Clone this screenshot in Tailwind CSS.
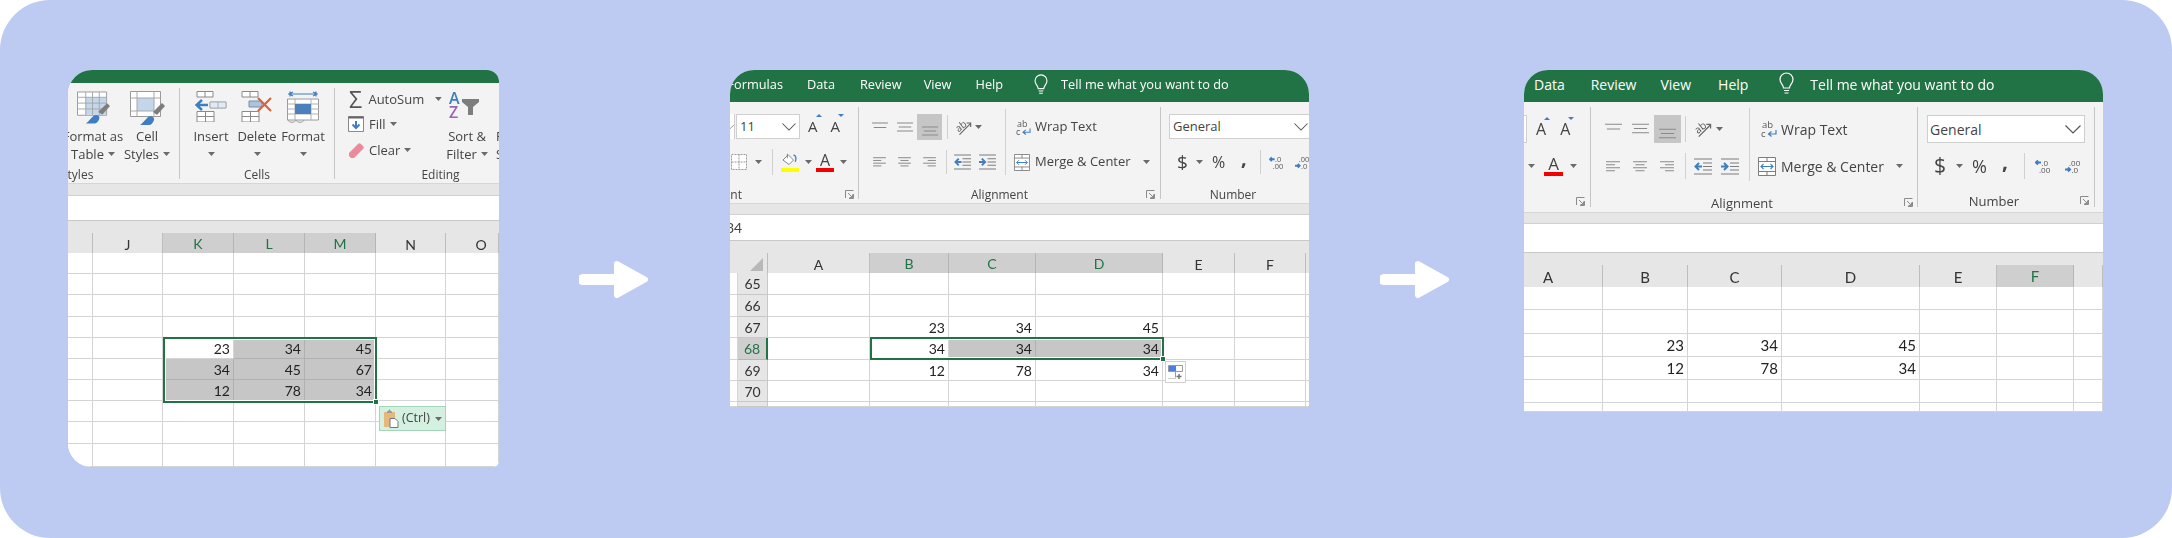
<!DOCTYPE html>
<html lang="en">
<head>
  <meta charset="UTF-8" />
  <title>Excel: delete row and shift up</title>
  <script src="https://cdn.jsdelivr.net/npm/@tailwindcss/browser@4"></script>
</head>
<body class="bg-white">

<!-- icon sheet -->
<svg width="0" height="0" class="absolute">
  <defs>
    <symbol id="caret" viewBox="0 0 7 4"><path d="M0 0h7L3.5 4z" fill="#6a6a6a"/></symbol>
    <symbol id="launcher" viewBox="0 0 9 9"><path d="M.5 8V.5H8.5M4 8.5H8.5V4M3 3l4.5 4.5M7.5 4.5v3h-3" fill="none" stroke="#8a8a8a"/></symbol>
    <symbol id="chevron" viewBox="0 0 16 9"><path d="M.5.5L8 8 15.5.5" fill="none" stroke="#555" stroke-width="1.2"/></symbol>
    <symbol id="al-top" viewBox="0 0 18 12"><path d="M0 1h18M2 6h14" stroke="#8a8a8a" stroke-width="1.2"/></symbol>
    <symbol id="al-mid" viewBox="0 0 18 12"><path d="M0 1h18M2 5.5h14M0 10h18" stroke="#8a8a8a" stroke-width="1.2"/></symbol>
    <symbol id="al-left" viewBox="0 0 14 11"><path d="M0 .8h14M0 3.8h9M0 6.8h14M0 9.8h9" stroke="#8a8a8a" stroke-width="1.1"/></symbol>
    <symbol id="al-center" viewBox="0 0 14 11"><path d="M0 .8h14M2.5 3.8h9M0 6.8h14M2.5 9.8h9" stroke="#8a8a8a" stroke-width="1.1"/></symbol>
    <symbol id="al-right" viewBox="0 0 14 11"><path d="M0 .8h14M5 3.8h9M0 6.8h14M5 9.8h9" stroke="#8a8a8a" stroke-width="1.1"/></symbol>
    <symbol id="ind-less" viewBox="0 0 18 17"><path d="M0 1h18M9 5h9M9 8.5h9M9 12h9M0 16h18" stroke="#7d7d7d" stroke-width="1.1"/><path d="M8 8.5H2M5 5L1.5 8.5 5 12" fill="none" stroke="#3f7fc1" stroke-width="2"/></symbol>
    <symbol id="ind-more" viewBox="0 0 18 17"><path d="M0 1h18M9 5h9M9 8.5h9M9 12h9M0 16h18" stroke="#7d7d7d" stroke-width="1.1"/><path d="M0 8.5h6M3 5l3.5 3.5L3 12" fill="none" stroke="#3f7fc1" stroke-width="2"/></symbol>
    <symbol id="orient" viewBox="0 0 19 18"><text x="1" y="12" transform="rotate(-38 6 9)" font-family="Open Sans" font-size="11" fill="#555">ab</text><path d="M5 17L17 5M13 4h4.500v4.500" fill="none" stroke="#666" stroke-width="1.300"/></symbol>
    <symbol id="wrap" viewBox="0 0 16 18"><text x="1" y="8" font-family="Open Sans" font-size="9.500" fill="#555">ab</text><text x="0" y="17" font-family="Open Sans" font-size="9.500" fill="#555">c</text><path d="M15 10v4H8M10.500 11.500L7.500 14l3 2.500" fill="none" stroke="#3f7fc1" stroke-width="1.200"/></symbol>
    <symbol id="merge" viewBox="0 0 18 19"><path d="M.5.5h17v18H.5zM.5 4.500h17M.5 14.500h17M9 .5v4M9 14.500v4" fill="#fff" stroke="#7d7d7d"/><path d="M3 9.500h12M5.500 7L3 9.500 5.500 12M12.500 7L15 9.500 12.500 12" fill="none" stroke="#3f7fc1" stroke-width="1.100"/></symbol>
    <symbol id="dec-more" viewBox="0 0 15 14"><path d="M6 3.500H1M3 1.500L1 3.500l2 2" fill="none" stroke="#3f7fc1" stroke-width="2"/><text x="6.500" y="6.500" font-family="Open Sans" font-size="8" fill="#555">.0</text><text x="4" y="13.500" font-family="Open Sans" font-size="8" fill="#555">.00</text></symbol>
    <symbol id="dec-less" viewBox="0 0 15 14"><text x="4" y="6.500" font-family="Open Sans" font-size="8" fill="#555">.00</text><path d="M0 10.500h5M3 8.500l2 2-2 2" fill="none" stroke="#3f7fc1" stroke-width="2"/><text x="6.500" y="13.500" font-family="Open Sans" font-size="8" fill="#555">.0</text></symbol>
    <symbol id="borders" viewBox="0 0 16 16"><path d="M.5.5h15v15H.5zM8 .5v15M.5 8h15" fill="#fff" stroke="#999" stroke-dasharray="2 1"/></symbol>
    <symbol id="bucket" viewBox="0 0 18 17"><path d="M1 8l6-6 6 6-5 5z" fill="#fff" stroke="#777"/><path d="M6 1v5" stroke="#777"/><path d="M13 2c3 1 3 5 2 8" fill="none" stroke="#3f7fc1" stroke-width="1.500"/></symbol>
    <symbol id="bulb" viewBox="0 0 15 24"><path d="M4.500 16c0-3-3.500-5-3.500-8.500a6.500 6.500 0 0113 0C14 11 10.500 13 10.500 16zM5 18.500h5M5.500 21h4" fill="none" stroke="#fff" stroke-width="1.200"/></symbol>
    <symbol id="tbl-brush" viewBox="0 0 34 33"><path d="M.5.5h30v24H.5z" fill="#fff" stroke="#9a9a9a"/><path d="M9 6h21v18H9z" fill="#c3d6ea"/><path d="M.5 6h30M.5 12h30M.5 18h30M9 .5v24M16 .5v24M23 .5v24" stroke="#a8a8a8" fill="none"/><path d="M22 21l9-9 3 3-8 9z" fill="#7d7d7d"/><path d="M9 33c2-1 5-5 8-8 3-2 7 0 6 3-1 3-3 5-5 5z" fill="#3f7fc1"/></symbol>
    <symbol id="cell-brush" viewBox="0 0 35 34"><path d="M.5.5h30v25H.5z" fill="#fff" stroke="#9a9a9a"/><path d="M7 7h17v13H7z" fill="#c3d6ea"/><path d="M.5 7h30M.5 20h30M7 .5v25M24 .5v25" stroke="#a8a8a8" fill="none"/><path d="M23 21l9-9 3 3-8 9z" fill="#7d7d7d"/><path d="M10 34c2-1 5-5 8-8 3-2 7 0 6 3-1 3-3 5-5 5z" fill="#3f7fc1"/></symbol>
    <symbol id="ins" viewBox="0 0 32 31"><path d="M2 .5h16v5.500H2zM10 .5v5.500M2 20.500h17V31H2zM10.500 20.500V31M2 25.500h17M15 11h16v6H15zM23 11v6" fill="#fff" stroke="#8a8a8a"/><path d="M15 11h16v6H15z" fill="#c3d6ea" fill-opacity=".5"/><path d="M13 14H2M7 9L1.500 14 7 19" fill="none" stroke="#3f7fc1" stroke-width="2.500"/></symbol>
    <symbol id="del" viewBox="0 0 32 31"><path d="M1 .5h16v5.500H1zM9 .5v5.500M1 20.500h17V31H1zM9.500 20.500V31M1 25.500h17" fill="#fff" stroke="#8a8a8a"/><path d="M8 10h13v6H8z" fill="#a9c4e0" stroke="#7d8fa0"/><path d="M17 7l13 13M30 7L17 20" stroke="#d9623c" stroke-width="2.200"/></symbol>
    <symbol id="fmt" viewBox="0 0 32 32"><path d="M1 3h30M3 .5v5M29 .5v5M6 1L2 3l4 2M26 1l4 2-4 2" fill="none" stroke="#3f7fc1" stroke-width="1.200"/><path d="M.5 8h31v21H.5z" fill="#fff" stroke="#9a9a9a"/><path d="M.5 13h31M.5 18h31M.5 23h31M8 8v21M24 8v21" stroke="#b0b0b0" fill="none"/><path d="M8 13h16v10H8z" fill="#4a80bc"/><path d="M1 29c1 3 7 3 8 0 1 3 7 3 8 0" fill="none" stroke="#999"/></symbol>
    <symbol id="fillbox" viewBox="0 0 16 16"><path d="M.5.5h15v15H.5z" fill="#fff" stroke="#8a8a8a"/><path d="M.5 1.500h15" stroke="#666" stroke-width="2"/><path d="M8 5v7M4.500 8.500L8 12l3.500-3.500" fill="none" stroke="#3f7fc1" stroke-width="2"/></symbol>
    <symbol id="eraser" viewBox="0 0 15 15"><path d="M0 10l9-9c1-1 2-1 3 0l2 2c1 1 1 2 0 3l-9 9c-1 .7-2 .7-3 0l-2-2c-.5-1-.5-2 0-3z" fill="#ea8a9a"/></symbol>
    <symbol id="funnel" viewBox="0 0 17 16"><path d="M0 0h17v3l-6 5v8H6V8L0 3z" fill="#7d7d7d"/></symbol>
    <symbol id="clip" viewBox="0 0 15 19"><path d="M0 3h11v15H0z" fill="#e5b97b"/><path d="M3 3c0-1 1-1 1.500-1 0-2 2-2 2 0 .5 0 1.500 0 1.500 1v1H3z" fill="#999"/><path d="M6 9.500h5l3 3v6H6z" fill="#fff" stroke="#777"/></symbol>
    <symbol id="quick" viewBox="0 0 15 15"><path d="M.5.5h14v6H.5z" fill="#fff" stroke="#999"/><path d="M1 1h7v5H1z" fill="#4a7fe0"/><path d="M.5 6.500h7v6" fill="none" stroke="#999"/><path d="M.5 13.500h7" stroke="#999" stroke-dasharray="1 1"/><path d="M11 9v5M8.500 11.500h5" stroke="#777" stroke-width="1.500"/></symbol>
    <symbol id="arrow" viewBox="0 0 70 40"><path d="M4 19.500h36" stroke="#fff" stroke-width="11" stroke-linecap="round"/><path d="M38 4l28 15.500L38 35z" fill="#fff" stroke="#fff" stroke-width="6" stroke-linejoin="round"/></symbol>
  </defs>
</svg>

<div class="w-[2172px] h-[538px] overflow-hidden rounded-[50px] bg-[#bdcbf3] flex items-start pt-[70px] pl-[68px] font-['Open_Sans',sans-serif] text-[#444]">

  <!-- step 1 -->
  <div class="w-[431px] h-[397px] shrink-0 overflow-hidden bg-white rounded-tl-[24px] rounded-tr-[12px] rounded-bl-[24px] rounded-br-[6px] blur-[0.3px]">
    <div class="h-[13px] bg-[#217346]"></div>
    <div class="h-[101px] bg-[#f3f3f3] border-b border-[#d6d6d6] flex text-[13px] leading-[18px]">
      <div class="w-[112px] h-[91px] mt-[5px] shrink-0 border-r border-[#c6c6c6] pt-[3px]">
        <div class="flex h-[72px]">
          <div class="w-[60px] -ml-[5px] shrink-0 flex flex-col items-center whitespace-nowrap">
            <svg class="w-[33px] h-[33px] mb-[3px]"><use href="#tbl-brush"/></svg>
            <span>Format as</span>
            <span class="flex items-center gap-[4px]">Table <svg class="w-[7px] h-[4px]"><use href="#caret"/></svg></span>
          </div>
          <div class="w-[48px] shrink-0 flex flex-col items-center whitespace-nowrap">
            <svg class="w-[35px] h-[34px] mb-[2px]"><use href="#cell-brush"/></svg>
            <span>Cell</span>
            <span class="flex items-center gap-[4px]">Styles <svg class="w-[7px] h-[4px]"><use href="#caret"/></svg></span>
          </div>
        </div>
        <div class="mt-[3px] -ml-[7px] text-[12px]">Styles</div>
      </div>
      <div class="w-[155px] h-[91px] mt-[5px] shrink-0 border-r border-[#c6c6c6] pt-[3px]">
        <div class="flex h-[72px] pl-[8px]">
          <div class="w-[46px] flex flex-col items-center"><svg class="w-[32px] h-[31px] mb-[5px]"><use href="#ins"/></svg><span>Insert</span><svg class="w-[7px] h-[4px] mt-[7px]"><use href="#caret"/></svg></div>
          <div class="w-[46px] flex flex-col items-center"><svg class="w-[32px] h-[31px] mb-[5px]"><use href="#del"/></svg><span>Delete</span><svg class="w-[7px] h-[4px] mt-[7px]"><use href="#caret"/></svg></div>
          <div class="w-[46px] flex flex-col items-center"><svg class="w-[32px] h-[32px] mb-[4px]"><use href="#fmt"/></svg><span>Format</span><svg class="w-[7px] h-[4px] mt-[7px]"><use href="#caret"/></svg></div>
        </div>
        <div class="mt-[3px] text-center text-[12px]">Cells</div>
      </div>
      <div class="flex-1 h-[91px] mt-[5px] pt-[3px]">
        <div class="flex h-[72px]">
          <div class="w-[107px] pl-[14px] shrink-0 flex flex-col">
            <div class="flex items-center h-[18px] mt-[-1px]"><span class="w-[20px] text-[23px] leading-none text-[#555]">Σ</span>AutoSum<svg class="w-[7px] h-[4px] ml-[11px]"><use href="#caret"/></svg></div>
            <div class="flex items-center h-[18px] mt-[7px]"><svg class="w-[16px] h-[16px] mr-[5px] -ml-[1px]"><use href="#fillbox"/></svg>Fill<svg class="w-[7px] h-[4px] ml-[4px]"><use href="#caret"/></svg></div>
            <div class="flex items-center h-[18px] mt-[8px]"><svg class="w-[15px] h-[15px] mr-[5px]"><use href="#eraser"/></svg>Clear<svg class="w-[7px] h-[4px] ml-[4px]"><use href="#caret"/></svg></div>
          </div>
          <div class="w-[50px] shrink-0 flex flex-col items-center whitespace-nowrap">
            <div class="h-[36px] w-[36px] flex items-start">
              <span class="flex flex-col text-[16px] leading-[14px] font-semibold"><span class="text-[#3f7fc1]">A</span><span class="text-[#9a63b8]">Z</span></span>
              <svg class="w-[17px] h-[16px] mt-[8px] ml-[2px]"><use href="#funnel"/></svg>
            </div>
            <span>Sort &amp;</span>
            <span class="flex items-center gap-[4px]">Filter <svg class="w-[7px] h-[4px]"><use href="#caret"/></svg></span>
          </div>
          <div class="ml-[4px] pt-[36px]"><div>F</div><div>S</div></div>
        </div>
        <div class="mt-[3px] w-[211px] text-center text-[12px]">Editing</div>
      </div>
    </div>
    <div class="h-[12px] bg-[#e6e6e6] border-b border-[#d0d0d0]"></div>
    <div class="h-[25px] bg-white border-b border-[#c8c8c8]"></div>
    <div class="h-[12px] bg-[#e6e6e6]"></div>
    <div id="sheet-1"></div>
  </div>

  <svg class="w-[70px] h-[40px] shrink-0 ml-[80px] mt-[190px]"><use href="#arrow"/></svg>

  <!-- step 2 -->
  <div class="w-[579px] h-[337px] shrink-0 ml-[81px] overflow-hidden bg-white rounded-t-[24px] blur-[0.3px]">
    <div class="h-[32px] pb-[2px] bg-[#217346] text-white text-[12.75px] flex items-center whitespace-nowrap">
      <span class="w-[53px] shrink-0 overflow-hidden flex justify-end">Formulas</span>
      <span class="ml-[24px]">Data</span>
      <span class="ml-[25px]">Review</span>
      <span class="ml-[22px]">View</span>
      <span class="ml-[24px]">Help</span>
      <svg class="w-[14px] h-[22px] ml-[31px]"><use href="#bulb"/></svg>
      <span class="ml-[13px]">Tell me what you want to do</span>
    </div>
    <div class="h-[102px] bg-[#f3f3f3] border-b border-[#d6d6d6] flex text-[13px]">
      <div class="w-[129px] h-[92px] mt-[5px] shrink-0 border-r border-[#c6c6c6] pt-[7px]">
        <div class="flex items-center h-[25px]">
          <div class="w-[5px] h-[25px] bg-white border-r border-[#cfcfcf] flex items-center overflow-hidden"><svg class="w-[8px] h-[6px] shrink-0 -ml-[4px]"><use href="#chevron"/></svg></div>
          <div class="w-[64px] h-[25px] ml-[1px] bg-white border border-[#cfcfcf] flex items-center justify-between pl-[3px] pr-[3px]"><span>11</span><svg class="w-[14px] h-[8px]"><use href="#chevron"/></svg></div>
          <span class="ml-[8px] text-[15px] relative">A<span class="absolute -top-[1px] -right-[4px] border-x-[3px] border-b-[3px] border-x-transparent border-b-[#3f7fc1]"></span></span>
          <span class="ml-[13px] text-[15px] relative">A<span class="absolute -top-[1px] -right-[4px] border-x-[3px] border-t-[3px] border-x-transparent border-t-[#3f7fc1]"></span></span>
        </div>
        <div class="flex items-center h-[26px] mt-[10px] pl-[1px]">
          <svg class="w-[16px] h-[16px]"><use href="#borders"/></svg>
          <svg class="w-[7px] h-[4px] ml-[8px]"><use href="#caret"/></svg>
          <div class="w-px h-[26px] bg-[#d0d0d0] ml-[10px]"></div>
          <div class="ml-[8px] w-[18px] flex flex-col"><svg class="w-[18px] h-[15px]"><use href="#bucket"/></svg><div class="h-[4px] bg-[#ffff00]"></div></div>
          <svg class="w-[7px] h-[4px] ml-[6px]"><use href="#caret"/></svg>
          <div class="ml-[4px] w-[18px] flex flex-col items-center"><span class="text-[16px] leading-[15px]">A</span><div class="h-[4px] w-full bg-[#f00000]"></div></div>
          <svg class="w-[7px] h-[4px] ml-[6px]"><use href="#caret"/></svg>
        </div>
        <div class="flex h-[18px] mt-[11px] text-[12px] leading-[18px]"><span class="w-[12px] shrink-0 overflow-hidden flex justify-end">Font</span><svg class="w-[9px] h-[9px] mt-[4px] ml-[103px]"><use href="#launcher"/></svg></div>
      </div>
      <div class="w-[302px] h-[92px] mt-[5px] shrink-0 border-r border-[#c6c6c6]">
        <div class="flex h-[68px] pt-[2px]">
          <div class="w-[146px] shrink-0 pt-[5px]">
            <div class="flex items-center h-[26px] pl-[13px]">
              <svg class="w-[16px] h-[11px]"><use href="#al-top"/></svg>
              <svg class="w-[16px] h-[11px] ml-[9px]"><use href="#al-mid"/></svg>
              <div class="w-[25px] h-[26px] ml-[4px] bg-[#c6c6c6] flex items-end justify-center pb-[3px]"><svg class="w-[16px] h-[11px]"><use href="#al-mid"/></svg></div>
              <div class="w-px h-[24px] bg-[#d0d0d0] ml-[5px]"></div>
              <svg class="w-[17px] h-[17px] ml-[7px]"><use href="#orient"/></svg>
              <svg class="w-[7px] h-[4px] ml-[3px]"><use href="#caret"/></svg>
            </div>
            <div class="flex items-center h-[26px] mt-[9px] pl-[14px]">
              <svg class="w-[13px] h-[10px]"><use href="#al-left"/></svg>
              <svg class="w-[13px] h-[10px] ml-[12px]"><use href="#al-center"/></svg>
              <svg class="w-[13px] h-[10px] ml-[12px]"><use href="#al-right"/></svg>
              <div class="w-px h-[24px] bg-[#d0d0d0] ml-[10px]"></div>
              <svg class="w-[17px] h-[16px] ml-[7px]"><use href="#ind-less"/></svg>
              <svg class="w-[17px] h-[16px] ml-[8px]"><use href="#ind-more"/></svg>
            </div>
          </div>
          <div class="w-px bg-[#d0d0d0] shrink-0"></div>
          <div class="pt-[5px] flex-1 whitespace-nowrap">
            <div class="flex items-center h-[26px] pl-[10px]"><svg class="w-[15px] h-[17px]"><use href="#wrap"/></svg><span class="ml-[4px]">Wrap Text</span></div>
            <div class="flex items-center h-[26px] mt-[9px] pl-[8px]"><svg class="w-[16px] h-[17px]"><use href="#merge"/></svg><span class="ml-[5px]">Merge &amp; Center</span><svg class="w-[7px] h-[4px] ml-[12px]"><use href="#caret"/></svg></div>
          </div>
        </div>
        <div class="flex h-[18px] mt-[11px] text-[12px] leading-[18px]"><span class="flex-1 text-center">Alignment</span><span class="w-[20px] pl-[6px] pt-[4px]"><svg class="w-[9px] h-[9px]"><use href="#launcher"/></svg></span></div>
      </div>
      <div class="w-[164px] h-[92px] mt-[5px] shrink-0 pt-[7px]">
        <div class="ml-[8px] w-[156px] h-[25px] bg-white border border-[#cfcfcf] flex items-center justify-between pl-[3px] pr-[16px]"><span>General</span><svg class="w-[14px] h-[8px]"><use href="#chevron"/></svg></div>
        <div class="flex items-center h-[26px] mt-[10px] pl-[16px]">
          <span class="text-[19px] w-[10px]">$</span>
          <svg class="w-[7px] h-[4px] ml-[9px]"><use href="#caret"/></svg>
          <span class="text-[16px] ml-[9px] w-[15px]">%</span>
          <span class="text-[20px] font-bold ml-[14px] w-[7px] -translate-y-[4px]">,</span>
          <div class="w-px h-[24px] bg-[#d0d0d0] ml-[12px]"></div>
          <svg class="w-[14px] h-[13px] ml-[8px]"><use href="#dec-more"/></svg>
          <svg class="w-[14px] h-[13px] ml-[12px]"><use href="#dec-less"/></svg>
        </div>
        <div class="flex h-[18px] mt-[11px] text-[12px] leading-[18px]"><span class="w-[144px] text-center">Number</span></div>
      </div>
    </div>
    <div class="h-[11px] bg-[#e6e6e6] border-b border-[#d0d0d0]"></div>
    <div class="h-[26px] bg-white border-b border-[#c8c8c8] text-[14px] leading-[25px] font-['Lato',sans-serif] -indent-[4px] overflow-hidden">34</div>
    <div class="h-[12px] bg-[#e6e6e6]"></div>
    <div id="sheet-2"></div>
  </div>

  <svg class="w-[70px] h-[40px] shrink-0 ml-[71px] mt-[190px]"><use href="#arrow"/></svg>

  <!-- step 3 -->
  <div class="w-[579px] h-[342px] shrink-0 ml-[74px] overflow-hidden bg-white rounded-t-[24px] blur-[0.3px]">
    <div class="h-[32px] pb-[4px] bg-[#217346] text-white text-[14px] flex items-center whitespace-nowrap">
      <span class="ml-[10px]">Data</span>
      <span class="ml-[26px]">Review</span>
      <span class="ml-[24px]">View</span>
      <span class="ml-[27px]">Help</span>
      <svg class="w-[15px] h-[24px] ml-[31px]"><use href="#bulb"/></svg>
      <span class="ml-[16px]">Tell me what you want to do</span>
    </div>
    <div class="h-[111px] bg-[#f3f3f3] border-b border-[#d6d6d6] flex text-[14px]">
      <div class="w-[67px] h-[100px] mt-[5px] shrink-0 border-r border-[#c6c6c6] pt-[8px]">
        <div class="flex items-center h-[28px]">
          <div class="w-[3px] h-[28px] bg-white border border-l-0 border-[#cfcfcf]"></div>
          <span class="ml-[9px] text-[16px] relative">A<span class="absolute top-0 -right-[4px] border-x-[3px] border-b-[3px] border-x-transparent border-b-[#3f7fc1]"></span></span>
          <span class="ml-[14px] text-[16px] relative">A<span class="absolute top-0 -right-[4px] border-x-[3px] border-t-[3px] border-x-transparent border-t-[#3f7fc1]"></span></span>
        </div>
        <div class="flex items-center h-[26px] mt-[10px] pl-[4px]">
          <svg class="w-[7px] h-[4px]"><use href="#caret"/></svg>
          <div class="ml-[9px] w-[19px] flex flex-col items-center"><span class="text-[17px] leading-[16px]">A</span><div class="h-[4px] w-full bg-[#f00000]"></div></div>
          <svg class="w-[7px] h-[4px] ml-[7px]"><use href="#caret"/></svg>
        </div>
        <div class="flex justify-end h-[20px] mt-[13px] pr-[5px] pt-[5px]"><svg class="w-[9px] h-[9px]"><use href="#launcher"/></svg></div>
      </div>
      <div class="w-[327px] h-[100px] mt-[5px] shrink-0 border-r border-[#c6c6c6]">
        <div class="flex h-[74px] pt-[1px]">
          <div class="w-[158px] shrink-0 pt-[7px]">
            <div class="flex items-center h-[28px] pl-[14px]">
              <svg class="w-[17px] h-[12px]"><use href="#al-top"/></svg>
              <svg class="w-[17px] h-[12px] ml-[10px]"><use href="#al-mid"/></svg>
              <div class="w-[27px] h-[28px] ml-[5px] bg-[#c6c6c6] flex items-end justify-center pb-[3px]"><svg class="w-[17px] h-[12px]"><use href="#al-mid"/></svg></div>
              <div class="w-px h-[26px] bg-[#d0d0d0] ml-[4px]"></div>
              <svg class="w-[18px] h-[18px] ml-[8px]"><use href="#orient"/></svg>
              <svg class="w-[7px] h-[4px] ml-[4px]"><use href="#caret"/></svg>
            </div>
            <div class="flex items-center h-[26px] mt-[10px] pl-[15px]">
              <svg class="w-[14px] h-[11px]"><use href="#al-left"/></svg>
              <svg class="w-[14px] h-[11px] ml-[13px]"><use href="#al-center"/></svg>
              <svg class="w-[14px] h-[11px] ml-[13px]"><use href="#al-right"/></svg>
              <div class="w-px h-[26px] bg-[#d0d0d0] ml-[11px]"></div>
              <svg class="w-[18px] h-[17px] ml-[8px]"><use href="#ind-less"/></svg>
              <svg class="w-[18px] h-[17px] ml-[9px]"><use href="#ind-more"/></svg>
            </div>
          </div>
          <div class="w-px bg-[#d0d0d0] shrink-0"></div>
          <div class="pt-[7px] flex-1 whitespace-nowrap">
            <div class="flex items-center h-[28px] pl-[11px]"><svg class="w-[16px] h-[18px]"><use href="#wrap"/></svg><span class="ml-[4px]">Wrap Text</span></div>
            <div class="flex items-center h-[26px] mt-[10px] pl-[8px]"><svg class="w-[18px] h-[19px]"><use href="#merge"/></svg><span class="ml-[5px]">Merge &amp; Center</span><svg class="w-[7px] h-[4px] ml-[12px]"><use href="#caret"/></svg></div>
          </div>
        </div>
        <div class="flex h-[20px] mt-[12px] text-[13px] leading-[20px]"><span class="flex-1 text-center">Alignment</span><span class="w-[24px] pl-[11px] pt-[5px]"><svg class="w-[9px] h-[9px]"><use href="#launcher"/></svg></span></div>
      </div>
      <div class="w-[177px] h-[100px] mt-[5px] shrink-0 border-r border-[#c6c6c6] pt-[8px]">
        <div class="ml-[9px] w-[158px] h-[28px] bg-white border border-[#cfcfcf] flex items-center justify-between pl-[2px] pr-[3px]"><span>General</span><svg class="w-[16px] h-[9px]"><use href="#chevron"/></svg></div>
        <div class="flex items-center h-[26px] mt-[10px] pl-[16px]">
          <span class="text-[21px] w-[11px]">$</span>
          <svg class="w-[7px] h-[4px] ml-[11px]"><use href="#caret"/></svg>
          <span class="text-[18px] ml-[9px] w-[16px]">%</span>
          <span class="text-[21px] font-bold ml-[14px] w-[7px] -translate-y-[4px]">,</span>
          <div class="w-px h-[26px] bg-[#d0d0d0] ml-[15px]"></div>
          <svg class="w-[15px] h-[14px] ml-[10px]"><use href="#dec-more"/></svg>
          <svg class="w-[15px] h-[14px] ml-[15px]"><use href="#dec-less"/></svg>
        </div>
        <div class="flex h-[20px] mt-[12px] text-[13px] leading-[20px]"><span class="flex-1 text-center">Number</span><span class="w-[24px] pl-[10px] pt-[5px]"><svg class="w-[9px] h-[9px]"><use href="#launcher"/></svg></span></div>
      </div>
    </div>
    <div class="h-[11px] bg-[#e6e6e6] border-b border-[#d0d0d0]"></div>
    <div class="h-[29px] bg-white border-b border-[#c8c8c8]"></div>
    <div class="h-[12px] bg-[#e6e6e6]"></div>
    <div id="sheet-3"></div>
  </div>
</div>

<script>
  // column headers and cell grid for each of the three sheets
  function buildSheet(id, opts) {
    const root = document.getElementById(id);
    const widths = opts.cols.map(c => c.w + 'px').join(' ');
    const font = opts.big ? 'text-[15px]' : 'text-[14px]';

    const head = document.createElement('div');
    head.className = "grid bg-[#e6e6e6] font-['Lato',sans-serif] " + font;
    head.style.gridTemplateColumns = widths;
    head.style.height = opts.headH + 'px';
    opts.cols.forEach(col => {
      const h = document.createElement('div');
      if (col.sel) {
        h.className = 'flex items-center justify-center bg-[#cfcfcf] text-[#217346] border-r border-[#b5b5b5] border-b-2 border-b-[#217346]';
      } else if (col.blank) {
        h.className = 'border-b border-[#a8a8a8]';
      } else {
        h.className = 'flex items-center justify-center text-[#333] border-r border-[#bdbdbd] border-b border-b-[#a8a8a8]';
      }
      if (col.pad) h.className += ' ' + col.pad;
      h.textContent = col.t || '';
      if (col.corner) {
        h.className = 'flex items-end justify-end pr-[4px] pb-[4px] border-r border-[#bdbdbd] border-b border-b-[#a8a8a8]';
        h.innerHTML = '<div class="w-[13px] h-[13px] bg-[#b8b8b8] [clip-path:polygon(100%_0,100%_100%,0_100%)]"></div>';
      }
      head.appendChild(h);
    });
    root.appendChild(head);

    const body = document.createElement('div');
    body.className = "relative grid font-['Lato',sans-serif] text-[#222] " + font;
    body.style.gridTemplateColumns = widths;
    body.style.gridTemplateRows = opts.rows.map(r => r + 'px').join(' ');
    opts.rows.forEach((_, r) => {
      opts.cols.forEach((col, c) => {
        const key = r + ',' + c;
        const cell = document.createElement('div');
        const grey = opts.grey && opts.grey.includes(key);
        cell.className = grey
          ? 'flex items-center justify-end pr-[3px] bg-[#c6c6c6] border-r border-b border-[#b0b0b0]'
          : 'flex items-center justify-end pr-[3px] bg-white border-r border-b border-[#d4d4d4]';
        if (c === opts.rowHeadCol) {
          cell.className = 'flex items-center justify-center bg-[#e6e6e6] border-r border-b border-[#c8c8c8] text-[#333]';
          if (opts.rowLabels[r] === opts.activeRow) {
            cell.className = 'flex items-center justify-center bg-[#cfcfcf] border-r-2 border-r-[#217346] border-b border-b-[#b5b5b5] text-[#217346]';
          }
          cell.textContent = opts.rowLabels[r] || '';
        }
        if (opts.vals && opts.vals[key]) cell.textContent = opts.vals[key];
        body.appendChild(cell);
      });
    });
    if (opts.extra) body.insertAdjacentHTML('beforeend', opts.extra);
    root.appendChild(body);
  }

  buildSheet('sheet-1', {
    headH: 20,
    cols: [{ w: 25 }, { w: 70, t: 'J' }, { w: 71, t: 'K', sel: 1 }, { w: 71, t: 'L', sel: 1 }, { w: 71, t: 'M', sel: 1 }, { w: 70, t: 'N' }, { w: 53, t: 'O', pad: 'pl-[18px]' }],
    rows: [21, 21, 22, 21, 21, 21, 21, 21, 22, 23],
    vals: { '4,2': '23', '4,3': '34', '4,4': '45', '5,2': '34', '5,3': '45', '5,4': '67', '6,2': '12', '6,3': '78', '6,4': '34' },
    grey: ['4,3', '4,4', '5,2', '5,3', '5,4', '6,2', '6,3', '6,4'],
    extra: `
      <div class="absolute left-[95px] top-[84px] w-[214px] h-[66px] border-2 border-[#217346] shadow-[inset_0_0_0_1px_#fff]">
        <div class="absolute -right-[4px] -bottom-[4px] w-[6px] h-[6px] bg-[#217346] border border-white"></div>
      </div>
      <div class="absolute left-[311px] top-[153px] w-[67px] h-[25px] bg-[#d3f0e0] border border-[#a3d5b8] flex items-center pl-[4px] font-['Open_Sans',sans-serif] text-[#444]">
        <svg class="w-[15px] h-[19px]"><use href="#clip"/></svg><span class="ml-[3px] text-[12.5px]">(Ctrl)</span><svg class="w-[7px] h-[4px] ml-[5px]"><use href="#caret"/></svg>
      </div>`
  });

  buildSheet('sheet-2', {
    headH: 20,
    cols: [{ w: 8, blank: 1 }, { w: 30, corner: 1 }, { w: 102, t: 'A' }, { w: 79, t: 'B', sel: 1 }, { w: 87, t: 'C', sel: 1 }, { w: 127, t: 'D', sel: 1 }, { w: 72, t: 'E' }, { w: 71, t: 'F' }, { w: 3, blank: 1 }],
    rows: [22, 22, 21, 22, 21, 21, 5],
    rowHeadCol: 1,
    rowLabels: ['65', '66', '67', '68', '69', '70', ''],
    activeRow: '68',
    vals: { '2,3': '23', '2,4': '34', '2,5': '45', '3,3': '34', '3,4': '34', '3,5': '34', '4,3': '12', '4,4': '78', '4,5': '34' },
    grey: ['3,4', '3,5'],
    extra: `
      <div class="absolute left-[140px] top-[64px] w-[294px] h-[23px] border-2 border-[#217346] shadow-[inset_0_0_0_1px_#fff]">
        <div class="absolute -right-[4px] -bottom-[4px] w-[6px] h-[6px] bg-[#217346] border border-white"></div>
      </div>
      <div class="absolute left-[435px] top-[88px] w-[21px] h-[22px] bg-white border border-[#d0d0d0] flex items-center justify-center">
        <svg class="w-[15px] h-[15px]"><use href="#quick"/></svg>
      </div>`
  });

  buildSheet('sheet-3', {
    big: true,
    headH: 22,
    cols: [{ w: 79, t: 'A', pad: 'pr-[30px]' }, { w: 85, t: 'B' }, { w: 94, t: 'C' }, { w: 138, t: 'D' }, { w: 77, t: 'E' }, { w: 77, t: 'F', sel: 1 }, { w: 29 }],
    rows: [23, 24, 23, 23, 23, 9],
    vals: { '2,1': '23', '2,2': '34', '2,3': '45', '3,1': '12', '3,2': '78', '3,3': '34' }
  });
</script>
</body>
</html>
